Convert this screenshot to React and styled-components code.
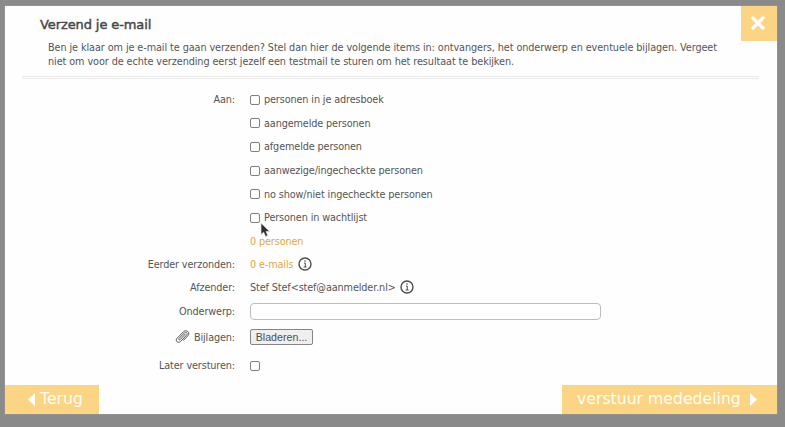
import React from 'react';
import styled, { createGlobalStyle } from 'styled-components';

const accent = '#fbd484';
const textColor = '#555555';

const GlobalStyle = createGlobalStyle`
body{
    margin: 0;
    background-color: #8a8a8a;
    overflow: hidden;
}
*{
    box-sizing: border-box;
}
`

const Page = styled.div`
position: relative;
height: 427px;
padding: 6px 8px 13px 5px;
font-family: "DejaVu Sans", sans-serif;
font-size: 9.7px;
letter-spacing: -0.12px;
line-height: 14px;
color: ${textColor};
`

const Dialog = styled.div`
height: 408px;
display: flex;
flex-direction: column;
background-color: #fefefe;
box-shadow: 0 0 1px #c9bfae;
`

const Header = styled.div`
display: flex;
justify-content: space-between;
align-items: flex-start;
height: 35px;
`

const Title = styled.h1`
margin: 10px 0 0 35px;
font-family: "DejaVu Sans", sans-serif;
font-size: 13px;
font-weight: 400;
line-height: 18px;
letter-spacing: -0.1px;
color: #484848;
-webkit-text-stroke: 0.45px #484848;
`

const CloseButton = styled.button`
display: flex;
justify-content: center;
align-items: center;
width: 36px;
height: 35px;
padding: 0 2px 1px 0;
border: 0;
background-color: ${accent};
`

const Intro = styled.p`
width: 677px;
height: 35px;
margin: 0 0 0 43px;
letter-spacing: -0.085px;
`

const Divider = styled.div`
flex: none;
width: 737px;
height: 3px;
margin-left: 17px;
border: 1px solid #e9e9e9;
border-radius: 1px;
`

const Form = styled.div`
flex: 1;
padding-top: 9px;
`

const Row = styled.div`
display: grid;
grid-template-columns: 230px 1fr;
column-gap: 15px;
align-items: center;
height: ${props => props.$height}px;
`

const Label = styled.div`
display: flex;
justify-content: flex-end;
align-items: center;
gap: 4px;

svg{
    margin-top: -2px;
}
`

const Field = styled.div`
display: flex;
align-items: center;
gap: ${props => props.$gap || 4}px;
color: ${props => props.$accent ? '#dda83f' : textColor};

svg{
    margin-top: -2px;
}
`

const Checkbox = styled.input.attrs({ type: 'checkbox' })`
appearance: none;
width: 10px;
height: 10px;
margin: -1px 0 0;
border: 1px solid #808080;
border-radius: 2px;
background-color: #ffffff;
`

const TextInput = styled.input.attrs({ type: 'text' })`
width: 351px;
height: 17px;
margin: -2px 0 0;
border: 1px solid #bdbdbd;
border-radius: 4px;
background-color: #ffffff;
`

const FileButton = styled.button`
width: 63px;
height: 16px;
margin: -2px 0 0;
padding: 0;
border: 1px solid #858585;
border-radius: 2px;
background-color: #efefef;
font-family: "Liberation Sans", Arial, sans-serif;
font-size: 10.7px;
line-height: 13px;
color: #505050;
`

const Footer = styled.div`
display: flex;
justify-content: space-between;
height: 29px;
`

const NavButton = styled.button`
display: flex;
align-items: center;
gap: ${props => props.$gap}px;
width: ${props => props.$width}px;
padding: 0 0 1px ${props => props.$indent}px;
border: 0;
background-color: ${accent};
font-family: "DejaVu Sans", sans-serif;
font-size: 15.7px;
line-height: 18px;
white-space: nowrap;
color: #fffdf4;
`

const Cursor = styled.svg`
position: absolute;
left: 260px;
top: 222px;
`

const CloseIcon = () => (
    <svg width='16' height='16' viewBox='0 0 16 16'>
        <path d='M3 3L13 13M13 3L3 13' stroke='#ffffff' strokeWidth='3.4' strokeLinecap='round' />
    </svg>
)

const InfoIcon = () => (
    <svg width='14' height='14' viewBox='0 0 14 14'>
        <circle cx='7' cy='7' r='6' fill='none' stroke='#4c4c4c' strokeWidth='1.4' />
        <path d='M6 6.1H7.3V10M5.6 10H8.6' fill='none' stroke='#4c4c4c' strokeWidth='1' />
        <circle cx='7' cy='4' r='0.8' fill='#4c4c4c' />
    </svg>
)

const ClipIcon = () => (
    <svg width='15' height='14' viewBox='0 0 15 14' fill='none' stroke='#555555' strokeWidth='1' strokeLinecap='round'>
        <path d='M10.2 4.2L5.1 9.6C4.3 10.4 3.2 9.4 4 8.5L9.4 2.9C11 1.3 13.2 3.3 11.7 5L5.5 11.5C3.2 13.8 -.2 10.9 2 8.3L8.5 1.7C11.3-.9 15.5 2.3 13.1 5.5L8.5 10.3' />
    </svg>
)

const Arrow = ({ left }) => (
    <svg width='7' height='13' viewBox='0 0 7 13'>
        <path d={left ? 'M7 0V13L0 6.5Z' : 'M0 0V13L7 6.5Z'} fill='#ffffff' />
    </svg>
)

const recipients = [
    { name: 'personen in je adresboek', height: 24 },
    { name: 'aangemelde personen', height: 23 },
    { name: 'afgemelde personen', height: 24 },
    { name: 'aanwezige/ingecheckte personen', height: 24 },
    { name: 'no show/niet ingecheckte personen', height: 23 },
    { name: 'Personen in wachtlijst', height: 24 },
]

const App = () => {

    return (
        <Page>
            <GlobalStyle />
            <Dialog>
                <Header>
                    <Title>Verzend je e-mail</Title>
                    <CloseButton aria-label='Sluiten'><CloseIcon /></CloseButton>
                </Header>
                <Intro>
                    Ben je klaar om je e-mail te gaan verzenden? Stel dan hier de volgende items in: ontvangers, het onderwerp en eventuele bijlagen. Vergeet niet om voor de echte verzending eerst jezelf een testmail te sturen om het resultaat te bekijken.
                </Intro>
                <Divider />

                <Form>
                    {recipients.map((item, index) => (
                        <Row key={item.name} $height={item.height}>
                            <Label>{index === 0 && 'Aan:'}</Label>
                            <Field as='label'><Checkbox />{item.name}</Field>
                        </Row>
                    ))}
                    <Row $height={23}>
                        <Label />
                        <Field $accent>0 personen</Field>
                    </Row>
                    <Row $height={23}>
                        <Label>Eerder verzonden:</Label>
                        <Field $accent $gap={5}>0 e-mails<InfoIcon /></Field>
                    </Row>
                    <Row $height={23}>
                        <Label>Afzender:</Label>
                        <Field $gap={4}>Stef Stef&lt;stef@aanmelder.nl&gt;<InfoIcon /></Field>
                    </Row>
                    <Row $height={26}>
                        <Label>Onderwerp:</Label>
                        <Field><TextInput /></Field>
                    </Row>
                    <Row $height={26}>
                        <Label><ClipIcon />Bijlagen:</Label>
                        <Field><FileButton>Bladeren...</FileButton></Field>
                    </Row>
                    <Row $height={30}>
                        <Label>Later versturen:</Label>
                        <Field><Checkbox /></Field>
                    </Row>
                </Form>

                <Footer>
                    <NavButton $width={94} $indent={23} $gap={5}><Arrow left />Terug</NavButton>
                    <NavButton $width={215} $indent={15} $gap={9}>verstuur mededeling<Arrow /></NavButton>
                </Footer>
            </Dialog>

            <Cursor width='11' height='16' viewBox='0 0 11 16'>
                <path d='M1 1V12.5L3.7 10.2L5.5 14.5L7.8 13.5L6 9.4H9.6Z' fill='#303030' stroke='#e8e8e8' strokeWidth='0.7' />
            </Cursor>
        </Page>
    )

}

export default App
